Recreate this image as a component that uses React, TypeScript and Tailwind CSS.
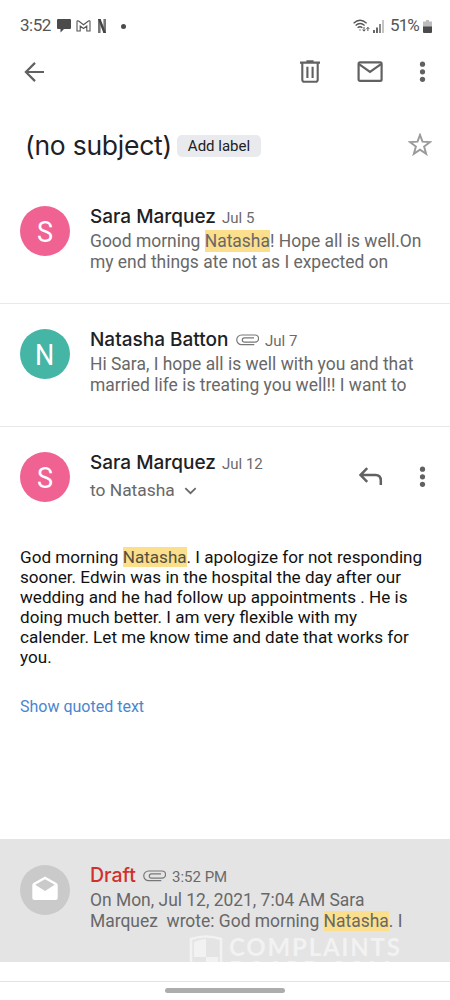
import React from 'react';

const DotsIcon: React.FC = () => (
  <svg width="8" height="24" viewBox="0 0 8 24" fill="#616161">
    <circle cx="4.5" cy="4.2" r="2.6" />
    <circle cx="4.5" cy="11.8" r="2.6" />
    <circle cx="4.5" cy="19.3" r="2.6" />
  </svg>
);

const ClipIcon: React.FC = () => (
  <svg width="23" height="12" viewBox="0 0 23 12" fill="none" stroke="#777" strokeWidth="1.2">
    <path d="M18.3 10.7H5.6A4.8 4.8 0 0 1 5.6 1H19A3.5 3.5 0 0 1 19 8.1H8.4A2.1 2.1 0 0 1 8.4 3.9H18" />
  </svg>
);

const Mark: React.FC<{ children: React.ReactNode; className?: string }> = ({ children, className }) => (
  <span className={`bg-[#fbdf8d] ${className ?? ''}`}>{children}</span>
);

const Avatar: React.FC<{ letter: string; className: string }> = ({ letter, className }) => (
  <div className={`flex size-[50px] shrink-0 items-center justify-center rounded-full pt-px text-[30px] leading-none text-white ${className}`}>
    <span className="scale-x-90">{letter}</span>
  </div>
);

const StatusBar: React.FC = () => (
  <div className="flex h-[52px] items-center justify-between pr-[18px] pl-5 text-[#555]">
    <div className="flex items-center">
      <span className="w-[32px] text-[17px] tracking-[-0.5px]">3:52</span>
      <svg className="ml-[5px]" width="14" height="14" viewBox="0 0 14 14" fill="#4b4b4b">
        <path d="M1 0H13A1 1 0 0 1 14 1V9A1 1 0 0 1 13 10H7L3.5 13.5V10H1A1 1 0 0 1 0 9V1A1 1 0 0 1 1 0Z" />
      </svg>
      <svg className="ml-[5px]" width="15" height="12" viewBox="0 0 15 12" fill="none" stroke="#555" strokeWidth="1.1">
        <path d="M1 11V1.5Q1.3.4 2.6 1L7.5 4.8 12.4 1Q13.7.4 14 1.5V11H10.8V6L7.5 8.5 4.2 6V11Z" />
      </svg>
      <svg className="ml-[7px]" width="8" height="14" viewBox="0 0 8 14">
        <path d="M0 0H2.6V14H0ZM5.4 0H8V14H5.4Z" fill="#777" />
        <path d="M0 0H2.6L8 14H5.4Z" fill="#444" />
      </svg>
      <span className="ml-[15px] size-[5px] rounded-full bg-[#4b4b4b]" />
    </div>
    <div className="flex items-center">
      <svg width="17" height="14" viewBox="0 0 17 14" fill="none" stroke="#555" strokeWidth="1.3">
        <path d="M.6 4.2Q7 -1.6 13.6 4.2M2.6 6.5Q7.1 2.6 11.6 6.5M4.6 8.7Q7.1 6.8 9.4 8.7" />
        <path d="M7 10.4V11.6" />
        <path d="M11 8V12M9.6 10.6 11 12.2 12.4 10.6M14.9 12V8.4M13.5 9.9 14.9 8.4 16.3 9.9" strokeWidth="1" />
      </svg>
      <svg className="ml-[3px]" width="11" height="13" viewBox="0 0 11 13">
        <path d="M0 10H2V13H0ZM3 7.5H5V13H3Z" fill="#666" />
        <path d="M6 4H8V13H6Z" fill="#888" />
        <path d="M9 0H11V13H9Z" fill="#c4c4c4" />
      </svg>
      <span className="mr-px ml-[6px] w-[32px] text-[17px] tracking-[-0.9px]">51%</span>
      <svg width="9" height="13" viewBox="0 0 9 13">
        <path d="M3 0H6V1.5H9V7H0V1.5H3Z" fill="#bdbdbd" />
        <path d="M0 6.5H9V12Q9 13 8 13H1Q0 13 0 12Z" fill="#4b4b4b" />
      </svg>
    </div>
  </div>
);

const Toolbar: React.FC = () => (
  <div className="flex h-[39px] items-center pr-[24px] pl-[24px]">
    <svg width="21" height="20" viewBox="0 0 21 20" fill="none" stroke="#616161" strokeWidth="2.2">
      <path d="M20 10H2M11 .9 1.9 10 11 19.1" />
    </svg>
    <svg className="ml-auto" width="20" height="23" viewBox="0 0 20 23" fill="none" stroke="#616161" strokeWidth="2.1">
      <path d="M0 2.6H20M6.4 1.3H13.6M2.3 2.6V20A1.8 1.8 0 0 0 4.1 21.8H15.9A1.8 1.8 0 0 0 17.7 20V2.6M7.4 6.8V18M12.6 6.8V18" />
    </svg>
    <svg className="ml-[37px]" width="26" height="21" viewBox="0 0 26 21" fill="none" stroke="#616161" strokeWidth="2.2">
      <rect x="1.6" y="1.4" width="23" height="18.4" rx="1.4" />
      <path d="M2 3.2 13 10.8 24 3.2" />
    </svg>
    <span className="ml-[35px]"><DotsIcon /></span>
  </div>
);

interface MessageRowProps {
  name: string;
  date: string;
  letter: string;
  color: string;
  clip?: boolean;
  nameWidth: string;
  children: React.ReactNode;
}

const MessageRow: React.FC<MessageRowProps> = ({ name, date, letter, color, clip, nameWidth, children }) => (
  <div className="flex h-[123px] border-b border-[#e9e9e9] pt-[25px] pl-5">
    <Avatar letter={letter} className={color} />
    <div className="ml-5">
      <div className="flex h-[22px] items-center whitespace-nowrap">
        <span className={`font-['Inter',sans-serif] text-[19px] font-medium text-[#202124] ${nameWidth}`}>{name}</span>
        {clip && <span className="mr-[6px]"><ClipIcon /></span>}
        <span className="pt-[3px] text-[15px] text-[#6a6a6a]">{date}</span>
      </div>
      <div className="mt-[3px] text-[17.45px] leading-[20.5px] whitespace-nowrap text-[#686868]">{children}</div>
    </div>
  </div>
);

const App: React.FC = () => (
  <div className="flex h-[1000px] w-[450px] flex-col overflow-hidden bg-white font-['Roboto',sans-serif]">
    <StatusBar />
    <Toolbar />

    <div className="mt-[30px] flex h-[50px] items-center pr-[18px] pl-[25px]">
      <h1 className="w-[152px] font-['Inter',sans-serif] text-[26.5px] tracking-[-0.25px] whitespace-nowrap text-[#202124]">(no subject)</h1>
      <span className="flex h-[22px] w-[84px] items-center justify-center rounded-[5px] bg-[#e8eaed] text-[15px] text-[#202124]">Add label</span>
      <svg className="mb-[3px] ml-auto" width="24" height="23" viewBox="0 0 24 23" fill="none" stroke="#9b9b9b" strokeWidth="1.9">
        <path d="M12 1.9 14.5 8.7 22 9 16.1 13.6 18.2 20.9 12 16.7 5.8 20.9 7.9 13.6 2 9 9.5 8.7Z" />
      </svg>
    </div>

    <div className="mt-[10px]">
      <MessageRow name="Sara Marquez" date="Jul 5" letter="S" color="bg-[#f06292]" nameWidth="w-[132px]">
        Good morning <Mark className="py-px">Natasha</Mark>! Hope all is well.On
        <br />
        my end things ate not as I expected on
      </MessageRow>
      <MessageRow name="Natasha Batton" date="Jul 7" letter="N" color="bg-[#45b5a6]" nameWidth="w-[146px]" clip>
        Hi Sara, I hope all is well with you and that
        <br />
        married life is treating you well!! I want to
      </MessageRow>
    </div>

    <div className="flex h-[120px] pt-[25px] pr-[24px] pl-5">
      <Avatar letter="S" className="bg-[#f06292]" />
      <div className="ml-5">
        <div className="flex h-[22px] items-center whitespace-nowrap">
          <span className="w-[132px] font-['Inter',sans-serif] text-[19px] font-medium text-[#202124]">Sara Marquez</span>
          <span className="pt-[3px] text-[15px] text-[#6a6a6a]">Jul 12</span>
        </div>
        <div className="mt-[6px] flex h-[20px] items-center text-[17.4px] text-[#686868]">
          to Natasha
          <svg className="mt-[2px] ml-[9px]" width="13" height="8" viewBox="0 0 13 8" fill="none" stroke="#686868" strokeWidth="1.7">
            <path d="M1.3 1.2 6.5 6.2 11.7 1.2" />
          </svg>
        </div>
      </div>
      <div className="ml-auto flex h-[50px] items-center">
        <svg width="24" height="20" viewBox="0 0 24 20" fill="none" stroke="#616161" strokeWidth="2.5">
          <path d="M8.2 1.2 1.4 8 8.2 14.8M1.4 8H16.5Q21.8 8 21.8 13.5V18" />
        </svg>
        <span className="ml-[35px]"><DotsIcon /></span>
      </div>
    </div>

    <div className="h-[120px] pl-5 text-[17.1px] leading-[20px] whitespace-nowrap text-[#111]">
      God morning <Mark className="text-[#55503c]">Natasha</Mark>. I apologize for not responding
      <br />
      sooner. Edwin was in the hospital the day after our
      <br />
      wedding and he had follow up appointments . He is
      <br />
      doing much better. I am very flexible with my
      <br />
      calender. Let me know time and date that works for
      <br />
      you.
    </div>
    <a className="mt-[30px] pl-5 text-[16px] leading-5 text-[#4a86cf]">Show quoted text</a>

    <div className="relative mt-auto flex h-[123px] shrink-0 overflow-hidden bg-[#e4e4e4] pt-[26px] pl-5">
      <div className="flex size-[50px] shrink-0 items-center justify-center rounded-full bg-[#cacaca]">
        <svg className="mb-[4px]" width="26" height="25" viewBox="0 0 26 25">
          <path d="M13 .5 24.5 7Q25.7 7.8 25.7 9V22Q25.7 24 23.7 24H2.3Q.3 24 .3 22V9Q.3 7.8 1.5 7Z" fill="#fff" />
          <path d="M13 3.2 22.8 8.8 13 15 3.2 8.8Z" fill="#cacaca" />
        </svg>
      </div>
      <div className="ml-5">
        <div className="flex h-[22px] items-center">
          <span className="w-[53px] font-['Inter',sans-serif] text-[19.5px] font-medium text-[#d2302b]">Draft</span>
          <ClipIcon />
          <span className="ml-[6px] pt-[3px] text-[15px] text-[#6a6a6a]">3:52 PM</span>
        </div>
        <div className="mt-[3px] text-[17.45px] leading-[20.5px] whitespace-pre text-[#686868]">
          On Mon, Jul 12, 2021, 7:04 AM Sara
          <br />
          {'Marquez  wrote: God morning '}<Mark>Natasha</Mark>. I
        </div>
      </div>
      <div className="absolute top-[96px] left-[189px] flex text-[#f2f2f2]">
        <svg width="34" height="34" viewBox="0 0 34 34">
          <path d="M2 4Q17-1 32 4V33H2Z" fill="none" stroke="#f2f2f2" strokeWidth="2.6" />
          <path d="M5 7Q11 4 17 4V22H5ZM17 22H29V32H17Z" fill="#f2f2f2" />
        </svg>
        <div className="ml-[6px] font-['Lato',sans-serif] text-[24px] leading-[23px] font-bold tracking-[1.8px]">
          COMPLAINTS
          <br />
          BOARD.COM
        </div>
      </div>
    </div>

    <div className="flex h-[38px] shrink-0 flex-col items-center">
      <div className="mt-[19px] h-px w-full bg-[#e4e4e4]" />
      <div className="mt-[6px] h-[5px] w-[120px] rounded-full bg-[#adadad]" />
    </div>
  </div>
);

export default App;
